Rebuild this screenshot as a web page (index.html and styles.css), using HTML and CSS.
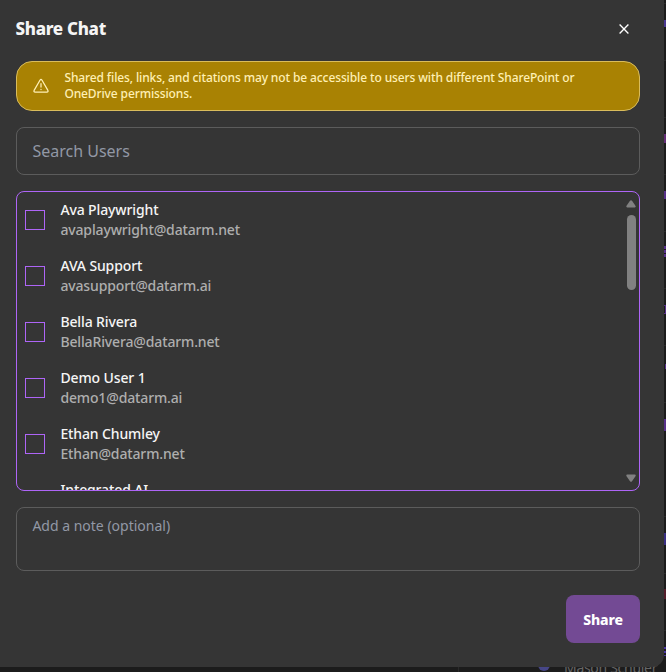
FILE: index.html
```html
<!DOCTYPE html>
<html lang="en">
<head>
<meta charset="utf-8">
<title>Share Chat</title>
<link rel="stylesheet" href="styles.css">
</head>
<body>
<div class="backdrop" aria-hidden="true">
  <i class="rule r1"></i><i class="rule r2"></i><i class="rule r3"></i><i class="rule r4"></i><i class="rule r5"></i><i class="rule r6"></i><i class="rule r7"></i><i class="rule r8"></i><i class="rule r9"></i><i class="rule r10"></i><i class="rule r11"></i>
  <i class="mark m1"></i><i class="mark m2"></i><i class="mark m3"></i><i class="mark m4"></i><i class="mark m5"></i><i class="mark m6"></i><i class="mark m7"></i><i class="mark m8"></i><i class="mark m9"></i><i class="mark m10"></i>
  <i class="column-line"></i>
  <i class="avatar"></i>
  <span class="owner">Mason Schuler</span>
</div>
<main class="dialog">
  <header class="header">
    <h1>Share Chat</h1>
    <button class="close" aria-label="Close"><svg width="10" height="10" viewBox="0 0 10 10"><path d="M.6.6l8.8 8.8M9.4.6L.6 9.4" stroke="#fff" stroke-width="1.35" fill="none"/></svg></button>
  </header>
  <section class="warning">
    <svg width="16" height="16" viewBox="0 0 16 16" fill="none" stroke="#fff0b5" stroke-width="1.25" stroke-linecap="round" stroke-linejoin="round"><path d="M7.1 2 1.1 12.4Q.5 14 2.1 14H13.9Q15.5 14 14.9 12.4L8.9 2Q8 .8 7.1 2Z"/><path d="M8 5.7v3.4M8 11.3v.2"/></svg>
    <p>Shared files, links, and citations may not be accessible to users with different SharePoint or OneDrive permissions.</p>
  </section>
  <input class="search" placeholder="Search Users">
  <section class="list">
    <div class="users">
      <label class="user"><i class="box"></i><span><b>Ava Playwright</b><small>avaplaywright@datarm.net</small></span></label>
      <label class="user"><i class="box"></i><span><b>AVA Support</b><small>avasupport@datarm.ai</small></span></label>
      <label class="user"><i class="box"></i><span><b>Bella Rivera</b><small>BellaRivera@datarm.net</small></span></label>
      <label class="user"><i class="box"></i><span><b>Demo User 1</b><small>demo1@datarm.ai</small></span></label>
      <label class="user"><i class="box"></i><span><b>Ethan Chumley</b><small>Ethan@datarm.net</small></span></label>
      <label class="user"><i class="box"></i><span><b>Integrated AI</b></span></label>
    </div>
    <div class="scrollbar">
      <svg width="10" height="8" viewBox="0 0 10 8"><path d="M4 .8Q5-.5 6 .8L9.6 6Q10 7.4 8.8 7.4H1.2Q0 7.4.4 6Z" fill="#818181"/></svg>
      <i class="thumb"></i>
      <svg class="down" width="10" height="8" viewBox="0 0 10 8"><path d="M4 7.2Q5 8.5 6 7.2L9.6 2Q10 .6 8.8 .6H1.2Q0 .6.4 2Z" fill="#818181"/></svg>
    </div>
  </section>
  <textarea class="note" placeholder="Add a note (optional)"></textarea>
  <footer class="footer"><button class="share">Share</button></footer>
</main>
</body>
</html>
```
FILE: styles.css
```css
* { box-sizing: border-box; }
body {
  margin: 0;
  height: 672px;
  position: relative;
  overflow: hidden;
  background: #1c1c1c;
  color: #f5f5f5;
  font-family: "Noto Sans", sans-serif;
}
button, input, textarea { font-family: inherit; }
.dialog {
  position: relative;
  width: 664px;
  height: 667px;
  padding: 17px 24px 24px 16px;
  background: #353535;
  border-radius: 0 0 12px 0;
  display: flex;
  flex-direction: column;
}
.header {
  height: 24px;
  margin-bottom: 20px;
  display: flex;
  align-items: center;
  justify-content: space-between;
  flex: none;
}
h1 { margin: 0 0 0 -.5px; font-size: 17px; line-height: 24px; font-weight: 800; letter-spacing: -.3px; }
.close { display: flex; padding: 0; margin-right: 11px; border: 0; background: none; }
.warning {
  height: 50px;
  flex: none;
  display: flex;
  align-items: center;
  gap: 15.4px;
  padding: 0 48px 0 16px;
  border: 1px solid #d9bc5c;
  border-radius: 16px;
  background: #a98203;
  color: #fff0b5;
}
.warning svg { flex: none; }
.warning p { margin: 0; font-size: 12px; line-height: 16px; font-weight: 500; letter-spacing: -.115px; }
.search, .note {
  display: block;
  width: 100%;
  flex: none;
  border: 1px solid #5c5c5c;
  border-radius: 8px;
  background: transparent;
  color: #fff;
  outline: 0;
  resize: none;
}
.search { height: 48px; margin-top: 16px; padding: 0 15.4px; font-size: 16px; }
.search::placeholder, .note::placeholder { color: #9298a5; opacity: 1; }
.list {
  height: 300px;
  margin-top: 16px;
  flex: none;
  display: flex;
  justify-content: space-between;
  overflow: hidden;
  border: 1px solid #ae65f7;
  border-radius: 8px;
}
.user { height: 56px; padding: 8px; display: flex; align-items: center; gap: 15.4px; }
.box { width: 20px; height: 20px; border: 1px solid #ae65f7; }
.user span { height: 40px; }
.user b, .user small { display: block; font-size: 14px; line-height: 20px; }
.user b { font-weight: 500; color: #f5f5f5; letter-spacing: -.12px; }
.user small { font-weight: 500; color: #aeaeae; letter-spacing: -.14px; }
.scrollbar { width: 9px; margin: 8px 3px 8px 0; display: flex; flex-direction: column; align-items: center; }
.thumb { width: 9px; height: 75px; margin-top: 7px; border-radius: 5px; background: #818181; }
.scrollbar svg { flex: none; margin-right: 1px; }
.scrollbar .down { margin-top: auto; }
.note { height: 64px; margin-top: 16px; padding: 8px 15.4px; font-size: 14px; line-height: 20px; }
.footer { margin-top: 24px; display: flex; justify-content: flex-end; }
.share { width: 74px; height: 48px; padding: 0; border: 0; border-radius: 8px; background: #734a94; color: #fff; font-size: 14px; font-weight: 800; letter-spacing: -.15px; }
/* Slivers of the page behind the dialog */
.rule, .mark, .column-line, .avatar, .owner { position: absolute; }
.rule { left: 664px; width: 2px; height: 1px; background: #2a2a2a; }
.r1 { top: 3px; } .r2 { top: 60px; } .r3 { top: 117px; } .r4 { top: 174px; } .r5 { top: 231px; } .r6 { top: 288px; }
.r7 { top: 345px; } .r8 { top: 402px; } .r9 { top: 516px; } .r10 { top: 573px; } .r11 { top: 630px; }
.mark { left: 664px; width: 2px; height: 9px; background: #57308a; }
.m1 { top: 20px; height: 7px; background: #493792; } .m2 { top: 134px; background: #632d75; } .m3 { top: 191px; height: 8px; }
.m4 { top: 246px; height: 11px; background: repeating-linear-gradient(#57308a 0 3px, #1c1c1c 3px 4px); }
.m5 { top: 305px; border: solid #57308a; border-width: 1px 1px 1px 0; background: none; }
.m6 { top: 364px; height: 5px; left: 665px; } .m7 { top: 419px; height: 12px; }
.m8 { top: 533px; height: 12px; background: #392f83; } .m9 { top: 589px; height: 10px; background: #541e2b; }
.m10 { top: 647px; height: 9px; background: repeating-linear-gradient(#4a35a0 0 2px, #1c1c1c 2px 4px); }
.column-line { left: 458px; top: 667px; width: 1px; height: 5px; background: #2a2a2a; }
.avatar { left: 538px; top: 659px; width: 12px; height: 12px; border-radius: 50%; background: #464687; }
.owner { left: 564px; top: 658px; font-size: 14px; line-height: 20px; letter-spacing: -.3px; color: #666; white-space: nowrap; }
```
